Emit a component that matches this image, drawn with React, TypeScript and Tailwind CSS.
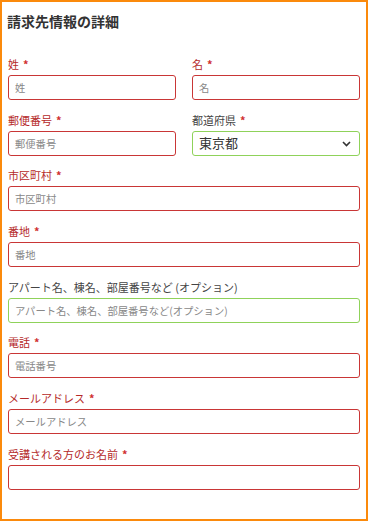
const font = { fontFamily: '"Noto Sans CJK JP", "Noto Sans", sans-serif' };

type Field = {
  label: string;
  placeholder?: string;
  valid?: boolean;
  required?: boolean;
};

function Label({ f }: { f: Field }) {
  return (
    <label className={`block h-[18px] leading-[18px] text-[11px] mb-[2px] ${f.valid ? 'text-[#444]' : 'text-[#b52a2a]'}`}>
      {f.label}
      {f.required !== false && <span className="text-[#d0302f] ml-[4px] font-bold">*</span>}
    </label>
  );
}

function Input({ f }: { f: Field }) {
  return (
    <input
      placeholder={f.placeholder}
      className={`block w-full h-[25px] rounded-[3px] border px-[6px] text-[10.3px] text-[#333] placeholder:text-[#888] outline-none ${f.valid ? 'border-[#8fd25a]' : 'border-[#c93636]'}`}
      style={font}
    />
  );
}

function Row({ f }: { f: Field }) {
  return (
    <div>
      <Label f={f} />
      <Input f={f} />
    </div>
  );
}

export default function App() {
  return (
    <div className="w-[368px] h-[521px] border-2 border-[#fb8a0c] bg-white px-[6px]" style={font}>
      <h3 className="-ml-[1px] mt-[7px] text-[14px] font-bold text-[#333] leading-[24px]">請求先情報の詳細</h3>
      <div className="mt-[22px] flex flex-col gap-[10.7px]">
        <div className="grid grid-cols-2 gap-[16px]">
          <Row f={{ label: '姓', placeholder: '姓' }} />
          <Row f={{ label: '名', placeholder: '名' }} />
        </div>
        <div className="grid grid-cols-2 gap-[16px]">
          <Row f={{ label: '郵便番号', placeholder: '郵便番号' }} />
          <div>
            <Label f={{ label: '都道府県', valid: true }} />
            <div className="relative h-[25px] rounded-[3px] border border-[#8fd25a] flex items-center px-[6px] text-[13px] text-[#333]">
              東京都
              <svg className="absolute right-[8px] top-[9px]" width="9" height="6" viewBox="0 0 9 6">
                <path d="M1 1l3.5 3.5L8 1" fill="none" stroke="#333" strokeWidth="1.6" />
              </svg>
            </div>
          </div>
        </div>
        <Row f={{ label: '市区町村', placeholder: '市区町村' }} />
        <Row f={{ label: '番地', placeholder: '番地' }} />
        <Row f={{ label: 'アパート名、棟名、部屋番号など (オプション)', placeholder: 'アパート名、棟名、部屋番号など(オプション)', valid: true, required: false }} />
        <Row f={{ label: '電話', placeholder: '電話番号' }} />
        <Row f={{ label: 'メールアドレス', placeholder: 'メールアドレス' }} />
        <Row f={{ label: '受講される方のお名前' }} />
      </div>
    </div>
  );
}
